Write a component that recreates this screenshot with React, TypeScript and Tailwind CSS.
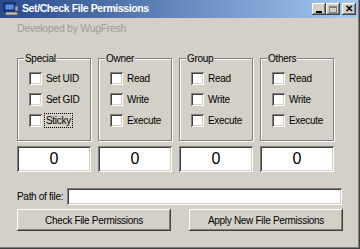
import React from 'react';

const sunken =
  'bg-white shadow-[inset_1px_1px_#808080,inset_-1px_-1px_#ffffff,inset_2px_2px_#404040,inset_-2px_-2px_#d4d0c8]';
const raised =
  'bg-[#d4d0c8] shadow-[inset_-1px_-1px_#404040,inset_1px_1px_#ffffff,inset_-2px_-2px_#808080,inset_2px_2px_#d4d0c8]';

const groups = [
  { title: 'Special', items: ['Set UID', 'Set GID', 'Sticky'] },
  { title: 'Owner', items: ['Read', 'Write', 'Execute'] },
  { title: 'Group', items: ['Read', 'Write', 'Execute'] },
  { title: 'Others', items: ['Read', 'Write', 'Execute'] },
];

const AppIcon = () => (
  <svg width="16" height="14" viewBox="0 0 16 14">
    <rect x="1" y="1" width="11" height="8" fill="#1e3f8f" stroke="#0b1f4f" strokeWidth="1" />
    <rect x="2.5" y="2.5" width="8" height="5" fill="#4f8fe0" />
    <path d="M3 10 L14 10 L15 13 L2 13 Z" fill="#c0c0c0" stroke="#505050" strokeWidth="0.8" />
    <rect x="12" y="4" width="3" height="5" fill="#9aa4b8" stroke="#505050" strokeWidth="0.6" />
  </svg>
);

const TitleButton = ({ children, disabled }: { children: React.ReactNode; disabled?: boolean }) => (
  <div className={`${raised} w-[14px] h-[12px] flex items-center justify-center ${disabled ? 'text-[#808080]' : 'text-black'}`}>
    {children}
  </div>
);

const Checkbox = ({ label, focused }: { label: string; focused?: boolean }) => (
  <div className="flex items-center h-[13px] gap-[3px]">
    <div className={`${sunken} w-[13px] h-[13px] shrink-0`} />
    <span className={`leading-[13px] px-[1px] ${focused ? 'outline outline-1 outline-dotted outline-black' : ''}`}>{label}</span>
  </div>
);

export default function App() {
  return (
    <div
      className="w-[360px] h-[249px] bg-[#d4d0c8] text-[10px] tracking-[-0.3px] text-black flex flex-col shadow-[inset_-1px_-1px_#404040,inset_-2px_-2px_#808080] overflow-hidden"
      style={{ fontFamily: '"Liberation Sans", Arial, sans-serif' }}
    >
      {/* title bar */}
      <div className="h-[18px] mr-[2px] flex items-center bg-gradient-to-r from-[#2a4a8c] to-[#a6caf0] pl-[3px] pr-[2px]">
        <AppIcon />
        <span className="ml-[3px] text-white font-bold text-[10.5px] tracking-[-0.4px]">Set/Check File Permissions</span>
        <div className="ml-auto flex items-center">
          <TitleButton>
            <div className="w-[6px] h-[2px] bg-black mt-[5px]" />
          </TitleButton>
          <TitleButton disabled>
            <div className="w-[8px] h-[7px] border border-[#808080] border-t-2" />
          </TitleButton>
          <div className="w-[2px]" />
          <TitleButton>
            <span className="font-bold text-[10px] leading-none">✕</span>
          </TitleButton>
        </div>
      </div>

      <div className="pl-[17px] pt-[4px]">
        <div className="text-[#a09c94] leading-[13px] text-[10.5px]">Developed by WugFresh</div>

        {/* permission groups */}
        <div className="flex gap-[7px] mt-[23px]">
          {groups.map((g) => (
            <div
              key={g.title}
              className="relative w-[74px] h-[83px] border border-[#808080] shadow-[inset_1px_1px_#ffffff,1px_1px_#ffffff] pt-[13px] pl-[11px] flex flex-col gap-[8px]"
            >
              <span className="absolute -top-[7px] left-[6px] px-[1px] bg-[#d4d0c8] leading-[13px]">{g.title}</span>
              {g.items.map((it) => (
                <Checkbox key={it} label={it} focused={it === 'Sticky'} />
              ))}
            </div>
          ))}
        </div>

        {/* octal values */}
        <div className="flex gap-[7px] mt-[5px]">
          {groups.map((g) => (
            <div key={g.title} className={`${sunken} w-[74px] h-[26px] flex items-center justify-center text-[16px] tracking-normal`}>
              0
            </div>
          ))}
        </div>

        {/* path row */}
        <div className="flex items-center mt-[16px] h-[16px]">
          <span className="w-[50px] shrink-0 whitespace-nowrap">Path of file:</span>
          <div className={`${sunken} w-[275px] h-[17px]`} />
        </div>

        {/* buttons */}
        <div className="flex gap-[18px] mt-[5px]">
          <button className={`${raised} w-[154px] h-[22px] text-[10px] tracking-[-0.3px]`}>Check File Permissions</button>
          <button className={`${raised} w-[154px] h-[22px] text-[10px] tracking-[-0.3px]`}>Apply New File Permissions</button>
        </div>
      </div>
    </div>
  );
}
